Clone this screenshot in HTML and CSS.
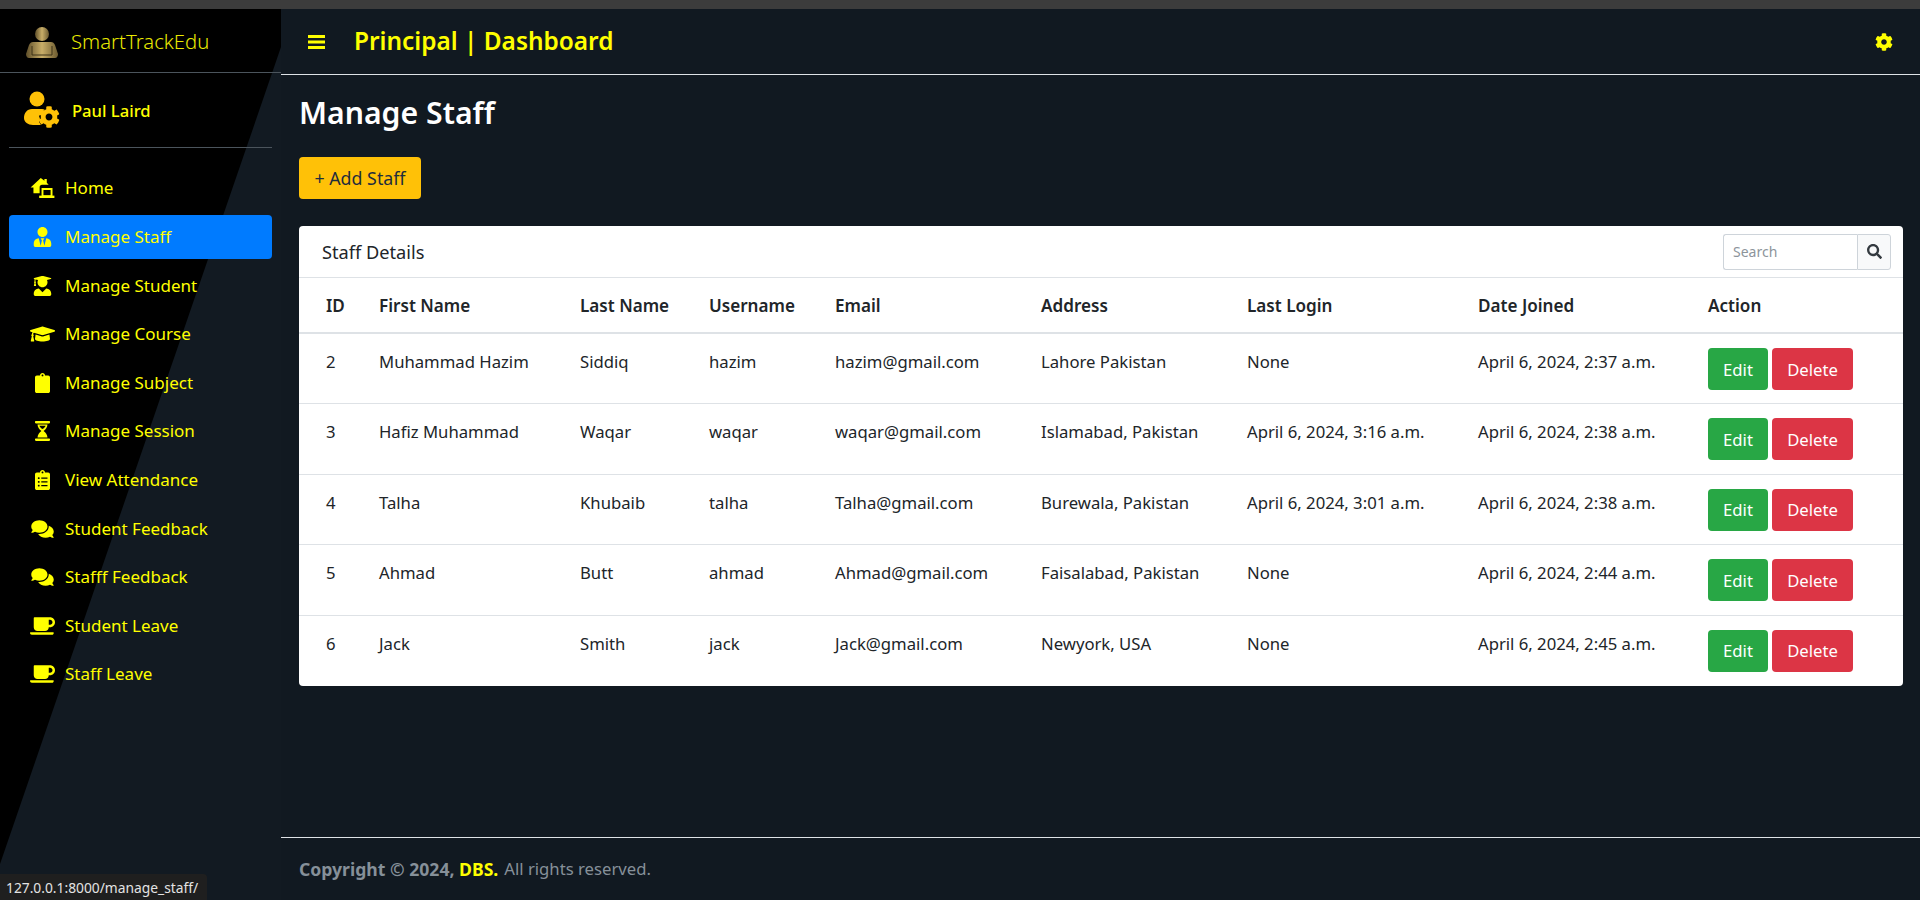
FILE: index.html
```html
<!DOCTYPE html>
<html lang="en">
<head>
  <meta charset="UTF-8" />
  <meta name="viewport" content="width=device-width, initial-scale=1.0"/>
  <title>Manage Staff</title>
  <link rel="stylesheet" href="styles.css">
</head>
<body>
<div class="browser-strip"></div>
<div class="app">
  <aside class="sidebar">
    <div class="brand">
      <svg class="brand-logo" viewBox="0 0 32 33">
        <defs>
          <linearGradient id="bronze" x1="0" x2="1" y1="0" y2="0">
            <stop offset="0" stop-color="#5f4f2a"/>
            <stop offset="0.5" stop-color="#c9ae68"/>
            <stop offset="1" stop-color="#6b5a30"/>
          </linearGradient>
        </defs>
        <circle cx="16" cy="8" r="7" fill="url(#bronze)"/>
        <path fill="url(#bronze)" d="M7 16h18c2 0 3 1 4 3l3 9c0 2-1 4-3 4H3c-2 0-3-2-3-4l3-9c1-2 2-3 4-3z"/>
        <path fill="none" stroke="#3d3218" stroke-width="1" d="M6 20v9h20v-9"/>
      </svg>
      <span class="brand-text">SmartTrackEdu</span>
    </div>
    <div class="user-panel">
      <svg class="user-icon" viewBox="0 0 36 38">
        <circle cx="13" cy="8" r="7.5" fill="#ffc107"/>
        <path fill="#ffc107" d="M8 18h10c1 0 2 .4 3 1-3 1-4 3-5 5l-1 1 1 3-1 3c1 1 1 2 2 3H9c-5 0-9-3-9-7 0-5 3-9 8-9z"/>
        <svg x="14" y="15" width="22" height="22" viewBox="0 0 512 512">
          <path fill="#ffc107" d="M487.4 315.7l-42.6-24.6c4.3-23.2 4.3-47 0-70.2l42.6-24.6c4.9-2.8 7.1-8.6 5.5-14-11.1-35.6-30-67.8-54.7-94.6-3.8-4.1-10-5.1-14.8-2.3L380.8 110c-17.9-15.4-38.5-27.3-60.8-35.1V25.8c0-5.6-3.9-10.5-9.4-11.7-36.7-8.2-74.3-7.8-109.2 0-5.5 1.2-9.4 6.1-9.4 11.7V75c-22.2 7.9-42.8 19.8-60.8 35.1L88.7 85.5c-4.9-2.8-11-1.9-14.8 2.3-24.7 26.7-43.6 58.9-54.7 94.6-1.7 5.4.6 11.2 5.5 14L67.3 221c-4.3 23.2-4.3 47 0 70.2l-42.6 24.6c-4.9 2.8-7.1 8.6-5.5 14 11.1 35.6 30 67.8 54.7 94.6 3.8 4.1 10 5.1 14.8 2.3l42.6-24.6c17.9 15.4 38.5 27.3 60.8 35.1v49.2c0 5.6 3.9 10.5 9.4 11.7 36.7 8.2 74.3 7.8 109.2 0 5.5-1.2 9.4-6.1 9.4-11.7v-49.2c22.2-7.9 42.8-19.8 60.8-35.1l42.6 24.6c4.9 2.8 11 1.9 14.8-2.3 24.7-26.7 43.6-58.9 54.7-94.6 1.5-5.5-.7-11.3-5.6-14.1zM256 336c-44.1 0-80-35.9-80-80s35.9-80 80-80 80 35.9 80 80-35.9 80-80 80z"/>
        </svg>
      </svg>
      <span class="user-name">Paul Laird</span>
    </div>
    <nav class="nav">
      <a class="nav-item">
        <svg class="nav-icon" viewBox="0 0 25 21">
          <path d="M10.700 0l3.800 3V1H17v4l2 2h-7c-1.500 0-2.500 1-2.500 2.500V16H3v-6H0z"/>
          <path fill="none" stroke="currentColor" stroke-width="2" d="M12.500 11.500h9.500V19h-9.500z"/>
          <path d="M9 18.500h16V21H9z"/>
        </svg>
        <span>Home</span>
      </a>
      <a class="nav-item active">
        <svg class="nav-icon" viewBox="0 0 448 512"><path d="M224 256c70.700 0 128-57.300 128-128S294.700 0 224 0 96 57.300 96 128s57.300 128 128 128zm95.800 32.600L272 480l-32-136 32-56h-96l32 56-32 136-47.800-191.400C56.900 292 0 350.300 0 422.400V464c0 26.500 21.500 48 48 48h352c26.500 0 48-21.500 48-48v-41.600c0-72.100-56.900-130.400-128.200-133.800z"/></svg>
        <span>Manage Staff</span>
      </a>
      <a class="nav-item">
        <svg class="nav-icon" viewBox="0 0 448 512"><path d="M319.400 320.600L224 416l-95.400-95.400C57.100 323.700 0 382.200 0 454.400v9.600c0 26.500 21.500 48 48 48h352c26.500 0 48-21.500 48-48v-9.600c0-72.200-57.100-130.700-128.600-133.800zM13.600 79.800l6.400 1.500v58.400c-7 4.200-12 11.500-12 20.300 0 8.400 4.600 15.400 11.100 19.700L3.500 242c-1.700 6.900 2.100 14 7.600 14h41.800c5.500 0 9.300-7.100 7.600-14l-15.600-62.300C51.400 175.400 56 168.400 56 160c0-8.800-5-16.100-12-20.300V87.100l66 15.900c-8.600 17.200-14 36.400-14 57 0 70.700 57.300 128 128 128s128-57.300 128-128c0-20.600-5.300-39.800-14-57l96.300-23.200c18.200-4.400 18.200-27.100 0-31.500l-190.400-46c-13-3.100-26.700-3.100-39.700 0L13.600 48.200c-18.100 4.400-18.100 27.200 0 31.600z"/></svg>
        <span>Manage Student</span>
      </a>
      <a class="nav-item">
        <svg class="nav-icon" viewBox="0 0 640 512"><path d="M622.340 153.200L343.400 67.500c-15.200-4.670-31.600-4.670-46.790 0L17.660 153.200c-23.540 7.230-23.540 38.360 0 45.590l48.630 14.940c-10.670 13.190-17.230 29.280-17.880 46.900C38.780 266.150 32 276.110 32 288c0 10.780 5.680 19.850 13.860 25.650L20.330 428.530C18.110 438.520 25.710 448 35.940 448h56.110c10.240 0 17.840-9.480 15.620-19.470L82.140 313.650C90.320 307.850 96 298.780 96 288c0-11.570-6.470-21.250-15.660-26.870.76-15.020 8.440-28.300 20.690-36.720L296.600 284.500c9.060 2.780 26.440 6.250 46.790 0l278.950-85.700c23.550-7.240 23.550-38.360 0-45.600zM352.790 315.090c-28.530 8.760-52.840 3.920-65.590 0l-145.020-44.550L128 384c0 35.350 85.960 64 192 64s192-28.650 192-64l-14.180-113.470-145.030 44.560z"/></svg>
        <span>Manage Course</span>
      </a>
      <a class="nav-item">
        <svg class="nav-icon" viewBox="0 0 384 512"><path d="M336 64h-80c0-35.300-28.700-64-64-64s-64 28.700-64 64H48C21.500 64 0 85.500 0 112v352c0 26.500 21.500 48 48 48h288c26.500 0 48-21.500 48-48V112c0-26.500-21.500-48-48-48zM192 40c13.300 0 24 10.700 24 24s-10.700 24-24 24-24-10.700-24-24 10.700-24 24-24z"/></svg>
        <span>Manage Subject</span>
      </a>
      <a class="nav-item">
        <svg class="nav-icon" viewBox="0 0 384 512"><path d="M24 0h336c13 0 24 11 24 24v16c0 13-11 24-24 24H24C11 64 0 53 0 40V24C0 11 11 0 24 0zM24 448h336c13 0 24 11 24 24v16c0 13-11 24-24 24H24c-13 0-24-11-24-24v-16c0-13 11-24 24-24z"/><path d="M64 88h256c-6 72-45 130-100 168 55 38 94 96 100 168H64c6-72 45-130 100-168C109 218 70 160 64 88zm48 32c10 28 28 52 80 84 52-32 70-56 80-84z"/></svg>
        <span>Manage Session</span>
      </a>
      <a class="nav-item">
        <svg class="nav-icon" viewBox="0 0 384 512"><path d="M336 64h-80c0-35.300-28.700-64-64-64s-64 28.700-64 64H48C21.500 64 0 85.500 0 112v352c0 26.500 21.500 48 48 48h288c26.500 0 48-21.500 48-48V112c0-26.500-21.500-48-48-48zM96 424c-13.300 0-24-10.700-24-24s10.700-24 24-24 24 10.700 24 24-10.700 24-24 24zm0-96c-13.300 0-24-10.700-24-24s10.700-24 24-24 24 10.700 24 24-10.700 24-24 24zm0-96c-13.300 0-24-10.700-24-24s10.700-24 24-24 24 10.700 24 24-10.700 24-24 24zm96-192c13.300 0 24 10.700 24 24s-10.700 24-24 24-24-10.700-24-24 10.700-24 24-24zm128 368c0 4.400-3.600 8-8 8H168c-4.400 0-8-3.600-8-8v-16c0-4.400 3.600-8 8-8h144c4.400 0 8 3.600 8 8v16zm0-96c0 4.400-3.600 8-8 8H168c-4.400 0-8-3.600-8-8v-16c0-4.400 3.600-8 8-8h144c4.400 0 8 3.600 8 8v16zm0-96c0 4.400-3.600 8-8 8H168c-4.400 0-8-3.600-8-8v-16c0-4.400 3.600-8 8-8h144c4.400 0 8 3.600 8 8v16z"/></svg>
        <span>View Attendance</span>
      </a>
      <a class="nav-item">
        <svg class="nav-icon" viewBox="0 0 576 512"><path d="M416 192c0-88.400-93.100-160-208-160S0 103.600 0 192c0 34.300 14.100 65.900 38 92-13.400 30.200-35.500 54.200-35.800 54.500-2.200 2.300-2.800 5.700-1.500 8.700S4.800 352 8 352c36.600 0 66.900-12.300 88.700-25 32.200 15.700 70.300 25 111.300 25 114.900 0 208-71.600 208-160zm122 220c23.900-26 38-57.700 38-92 0-66.900-53.500-124.200-129.300-148.100.9 6.600 1.300 13.300 1.300 20.100 0 105.900-107.700 192-240 192-10.800 0-21.300-.8-31.700-1.900C207.800 439.600 281.800 480 368 480c41 0 79.100-9.200 111.300-25 21.800 12.700 52.100 25 88.700 25 3.200 0 6.100-1.900 7.300-4.800 1.300-2.900.7-6.300-1.500-8.700-.3-.3-22.400-24.200-35.800-54.500z"/></svg>
        <span>Student Feedback</span>
      </a>
      <a class="nav-item">
        <svg class="nav-icon" viewBox="0 0 576 512"><path d="M416 192c0-88.400-93.100-160-208-160S0 103.600 0 192c0 34.300 14.100 65.900 38 92-13.400 30.200-35.500 54.200-35.800 54.500-2.200 2.300-2.800 5.700-1.500 8.700S4.800 352 8 352c36.600 0 66.900-12.300 88.700-25 32.200 15.700 70.300 25 111.300 25 114.900 0 208-71.600 208-160zm122 220c23.900-26 38-57.700 38-92 0-66.900-53.500-124.200-129.300-148.100.9 6.600 1.300 13.300 1.300 20.100 0 105.900-107.700 192-240 192-10.800 0-21.300-.8-31.700-1.900C207.800 439.600 281.800 480 368 480c41 0 79.100-9.200 111.300-25 21.800 12.700 52.100 25 88.700 25 3.200 0 6.100-1.900 7.300-4.800 1.300-2.900.7-6.300-1.500-8.700-.3-.3-22.400-24.200-35.800-54.500z"/></svg>
        <span>Stafff Feedback</span>
      </a>
      <a class="nav-item">
        <svg class="nav-icon" viewBox="0 0 640 512"><path d="M192 384h192c53 0 96-43 96-96h32c70.600 0 128-57.400 128-128S582.600 32 512 32H120c-13.300 0-24 10.700-24 24v232c0 53 43 96 96 96zM512 96c35.300 0 64 28.700 64 64s-28.700 64-64 64h-32V96h32zm47.700 384H48.300c-47.600 0-61-64-36-64h583.300c25 0 11.800 64-35.900 64z"/></svg>
        <span>Student Leave</span>
      </a>
      <a class="nav-item">
        <svg class="nav-icon" viewBox="0 0 640 512"><path d="M192 384h192c53 0 96-43 96-96h32c70.600 0 128-57.400 128-128S582.600 32 512 32H120c-13.300 0-24 10.700-24 24v232c0 53 43 96 96 96zM512 96c35.300 0 64 28.700 64 64s-28.700 64-64 64h-32V96h32zm47.700 384H48.300c-47.600 0-61-64-36-64h583.300c25 0 11.800 64-35.900 64z"/></svg>
        <span>Staff Leave</span>
      </a>
    </nav>
  </aside>

  <main class="main">
    <header class="topbar">
      <svg class="menu-icon" viewBox="0 0 17 14"><path d="M0 0h17v3H0zM0 5.500h17v3H0zM0 11h17v3H0z"/></svg>
      <span class="topbar-title">Principal | Dashboard</span>
      <svg class="gear-icon" viewBox="0 0 512 512"><path d="M487.400 315.700l-42.600-24.600c4.300-23.200 4.300-47 0-70.200l42.600-24.600c4.900-2.800 7.100-8.600 5.500-14-11.100-35.600-30-67.800-54.700-94.600-3.800-4.100-10-5.100-14.800-2.300L380.800 110c-17.900-15.400-38.500-27.300-60.800-35.100V25.800c0-5.600-3.900-10.500-9.400-11.700-36.700-8.200-74.300-7.800-109.200 0-5.500 1.200-9.400 6.100-9.400 11.700V75c-22.200 7.900-42.800 19.800-60.800 35.100L88.700 85.500c-4.900-2.800-11-1.900-14.800 2.300-24.700 26.700-43.600 58.900-54.700 94.600-1.700 5.400.6 11.200 5.500 14L67.300 221c-4.300 23.200-4.300 47 0 70.200l-42.600 24.600c-4.900 2.800-7.100 8.600-5.500 14 11.100 35.600 30 67.800 54.700 94.600 3.800 4.100 10 5.100 14.800 2.300l42.600-24.600c17.900 15.400 38.500 27.300 60.800 35.100v49.200c0 5.600 3.900 10.500 9.400 11.700 36.700 8.200 74.300 7.800 109.200 0 5.500-1.200 9.400-6.100 9.400-11.700v-49.200c22.200-7.900 42.800-19.800 60.800-35.100l42.600 24.600c4.900 2.800 11 1.900 14.800-2.300 24.700-26.700 43.600-58.900 54.700-94.600 1.500-5.500-.7-11.300-5.600-14.100zM256 336c-44.100 0-80-35.900-80-80s35.900-80 80-80 80 35.900 80 80-35.900 80-80 80z"/></svg>
    </header>

    <section class="content">
      <h1 class="page-title">Manage Staff</h1>
      <button class="btn btn-add">+ Add Staff</button>

      <div class="card">
        <div class="card-header">
          <span class="card-title">Staff Details</span>
          <div class="search">
            <input class="search-input" type="text" placeholder="Search">
            <button class="search-btn">
              <svg viewBox="0 0 512 512"><path d="M505 442.700L405.300 343c-4.500-4.500-10.600-7-17-7H372c27.600-35.300 44-79.700 44-128C416 93.100 322.900 0 208 0S0 93.100 0 208s93.100 208 208 208c48.300 0 92.700-16.400 128-44v16.300c0 6.400 2.500 12.500 7 17l99.700 99.700c9.400 9.400 24.600 9.400 33.900 0l28.300-28.300c9.400-9.400 9.400-24.600.1-34zM208 336c-70.700 0-128-57.200-128-128 0-70.700 57.200-128 128-128 70.700 0 128 57.200 128 128 0 70.700-57.200 128-128 128z"/></svg>
            </button>
          </div>
        </div>
        <table class="staff-table">
          <thead>
            <tr>
              <th>ID</th><th>First Name</th><th>Last Name</th><th>Username</th><th>Email</th><th>Address</th><th>Last Login</th><th>Date Joined</th><th>Action</th>
            </tr>
          </thead>
          <tbody>
            <tr>
              <td>2</td><td>Muhammad Hazim</td><td>Siddiq</td><td>hazim</td><td>hazim@gmail.com</td><td>Lahore Pakistan</td><td>None</td><td>April 6, 2024, 2:37 a.m.</td>
              <td class="actions"><button class="btn btn-edit">Edit</button><button class="btn btn-delete">Delete</button></td>
            </tr>
            <tr>
              <td>3</td><td>Hafiz Muhammad</td><td>Waqar</td><td>waqar</td><td>waqar@gmail.com</td><td>Islamabad, Pakistan</td><td>April 6, 2024, 3:16 a.m.</td><td>April 6, 2024, 2:38 a.m.</td>
              <td class="actions"><button class="btn btn-edit">Edit</button><button class="btn btn-delete">Delete</button></td>
            </tr>
            <tr>
              <td>4</td><td>Talha</td><td>Khubaib</td><td>talha</td><td>Talha@gmail.com</td><td>Burewala, Pakistan</td><td>April 6, 2024, 3:01 a.m.</td><td>April 6, 2024, 2:38 a.m.</td>
              <td class="actions"><button class="btn btn-edit">Edit</button><button class="btn btn-delete">Delete</button></td>
            </tr>
            <tr>
              <td>5</td><td>Ahmad</td><td>Butt</td><td>ahmad</td><td>Ahmad@gmail.com</td><td>Faisalabad, Pakistan</td><td>None</td><td>April 6, 2024, 2:44 a.m.</td>
              <td class="actions"><button class="btn btn-edit">Edit</button><button class="btn btn-delete">Delete</button></td>
            </tr>
            <tr>
              <td>6</td><td>Jack</td><td>Smith</td><td>jack</td><td>Jack@gmail.com</td><td>Newyork, USA</td><td>None</td><td>April 6, 2024, 2:45 a.m.</td>
              <td class="actions"><button class="btn btn-edit">Edit</button><button class="btn btn-delete">Delete</button></td>
            </tr>
          </tbody>
        </table>
      </div>
    </section>

    <footer class="footer">
      <strong>Copyright &copy; 2024, <span class="footer-brand">DBS.</span></strong> All rights reserved.
    </footer>
  </main>
</div>
<div class="status-link">127.0.0.1:8000/manage_staff/</div>
</body>
</html>
```

FILE: styles.css
```css
* { box-sizing: border-box; }
html, body { height: 100%; }
body {
  margin: 0;
  background-color: #111921;
  color: #212529;
  font-family: "Noto Sans", "Open Sans", sans-serif;
  font-size: 16.7px;
  line-height: 24px;
  display: flex;
  flex-direction: column;
  overflow: hidden;
}
.browser-strip { height: 9px; background-color: #3c3c3c; flex: none; }
.app { flex: 1; display: flex; min-height: 0; }

/* sidebar */
.sidebar {
  position: relative;
  width: 281px;
  flex: none;
  background-color: #121a22;
  color: #ffff00;
}
.sidebar::before {
  content: "";
  position: absolute;
  inset: 0;
  background-color: #000;
  clip-path: polygon(0 0, 100% 0, 100% 38px, 0 855px);
}
.brand, .user-panel, .nav { position: relative; }
.brand {
  height: 64px;
  display: flex;
  align-items: center;
  padding: 0 0 0 26px;
  border-bottom: 1px solid #4b545c;
}
.brand-logo { width: 32px; height: 33px; margin-top: 3px; }
.brand-text { margin-left: 13px; font-size: 20.3px; font-weight: 300; color: #e8e800; }
.user-panel {
  height: 75px;
  margin: 0 9px;
  display: flex;
  align-items: center;
  padding-left: 15px;
  border-bottom: 1px solid #4b545c;
}
.user-icon { width: 36px; height: 38px; }
.user-name { margin: 1px 0 0 12px; font-size: 16.6px; font-weight: 500; color: #ffff00; }
.nav { padding: 18px 9px 0; display: flex; flex-direction: column; gap: 3.8px; }
.nav-item {
  height: 44.8px;
  display: flex;
  align-items: center;
  padding-left: 21px;
  border-radius: 4px;
  color: #ffff00;
  font-size: 17px;
}
.nav-item.active { background-color: #007bff; }
.nav-icon { width: 25px; height: 20px; fill: currentColor; margin-right: 10px; flex: none; }

/* main column */
.main { flex: 1; display: flex; flex-direction: column; min-width: 0; }
.topbar {
  height: 66px;
  flex: none;
  display: flex;
  align-items: center;
  padding: 0 27px 0 27px;
  border-bottom: 1px solid #dee2e6;
  color: #ffff00;
}
.menu-icon { width: 17px; height: 14px; fill: currentColor; }
.topbar-title { margin: 0 0 2px 29px; font-size: 24.4px; font-weight: 600; line-height: 32px; }
.gear-icon { width: 18px; height: 18px; fill: currentColor; margin-left: auto; }

.content { flex: 1; padding: 19px 17px 0 18px; }
.page-title {
  margin: 0 0 25px;
  color: #fff;
  font-size: 30.2px;
  font-weight: 600;
  line-height: 38px;
}
.btn {
  height: 42px;
  padding: 0;
  border: none;
  border-radius: 4px;
  font-family: inherit;
  font-size: 16.7px;
  cursor: pointer;
}
.btn-add { display: block; width: 122px; background-color: #ffc107; color: #1f2d3d; font-size: 17.8px; }

.card {
  margin-top: 27px;
  background-color: #fff;
  border-radius: 4px;
  overflow: hidden;
}
.card-header {
  height: 52px;
  display: flex;
  align-items: center;
  justify-content: space-between;
  padding: 0 12px 0 23px;
  border-bottom: 1px solid #dee2e6;
}
.card-title { font-size: 18.2px; }
.search { display: flex; height: 36px; }
.search-input {
  width: 134px;
  padding: 0 9px;
  border: 1px solid #ced4da;
  border-right: none;
  border-radius: 3px 0 0 3px;
  font-family: inherit;
  font-size: 14px;
  outline: none;
}
.search-input::placeholder { color: #8d949b; }
.search-btn {
  width: 34px;
  display: flex;
  align-items: center;
  justify-content: center;
  padding: 0;
  background-color: #f8f9fa;
  border: 1px solid #ced4da;
  border-radius: 0 3px 3px 0;
}
.search-btn svg { width: 15px; height: 15px; fill: #343a40; }

.staff-table { width: 100%; table-layout: fixed; border-collapse: collapse; }
.staff-table th, .staff-table td { padding: 0 0 0 27px; text-align: left; vertical-align: top; }
.staff-table th {
  height: 55px;
  padding-top: 2px;
  font-size: 17.1px;
  font-weight: 600;
  vertical-align: middle;
  border-bottom: 2px solid #dee2e6;
}
.staff-table td { height: 70.6px; padding-top: 16px; white-space: nowrap; }
.staff-table tbody tr + tr td { border-top: 1px solid #dee2e6; }
.staff-table th:nth-child(1) { width: 53px; }
.staff-table th:nth-child(2) { width: 201px; }
.staff-table th:nth-child(3) { width: 129px; }
.staff-table th:nth-child(4) { width: 126px; }
.staff-table th:nth-child(5) { width: 206px; }
.staff-table th:nth-child(6) { width: 206px; }
.staff-table th:nth-child(7) { width: 231px; }
.staff-table th:nth-child(8) { width: 230px; }
.staff-table td.actions { padding-top: 14px; }
.btn-edit { width: 60px; margin-right: 4px; background-color: #28a745; color: #fff; }
.btn-delete { width: 81px; background-color: #dc3545; color: #fff; }

.footer {
  height: 63px;
  flex: none;
  display: flex;
  align-items: center;
  gap: 6px;
  padding-left: 18px;
  border-top: 1px solid #dee2e6;
  color: #869099;
}
.footer strong { font-size: 17.6px; font-weight: 700; }
.footer-brand { color: #ffff00; }

.status-link {
  position: absolute;
  left: 0;
  bottom: 0;
  width: 207px;
  height: 26px;
  padding: 0 6px;
  background-color: #1f1f1f;
  border-radius: 0 4px 0 0;
  color: #e3e3e3;
  font-size: 13.8px;
  line-height: 27px;
  white-space: nowrap;
}
```
